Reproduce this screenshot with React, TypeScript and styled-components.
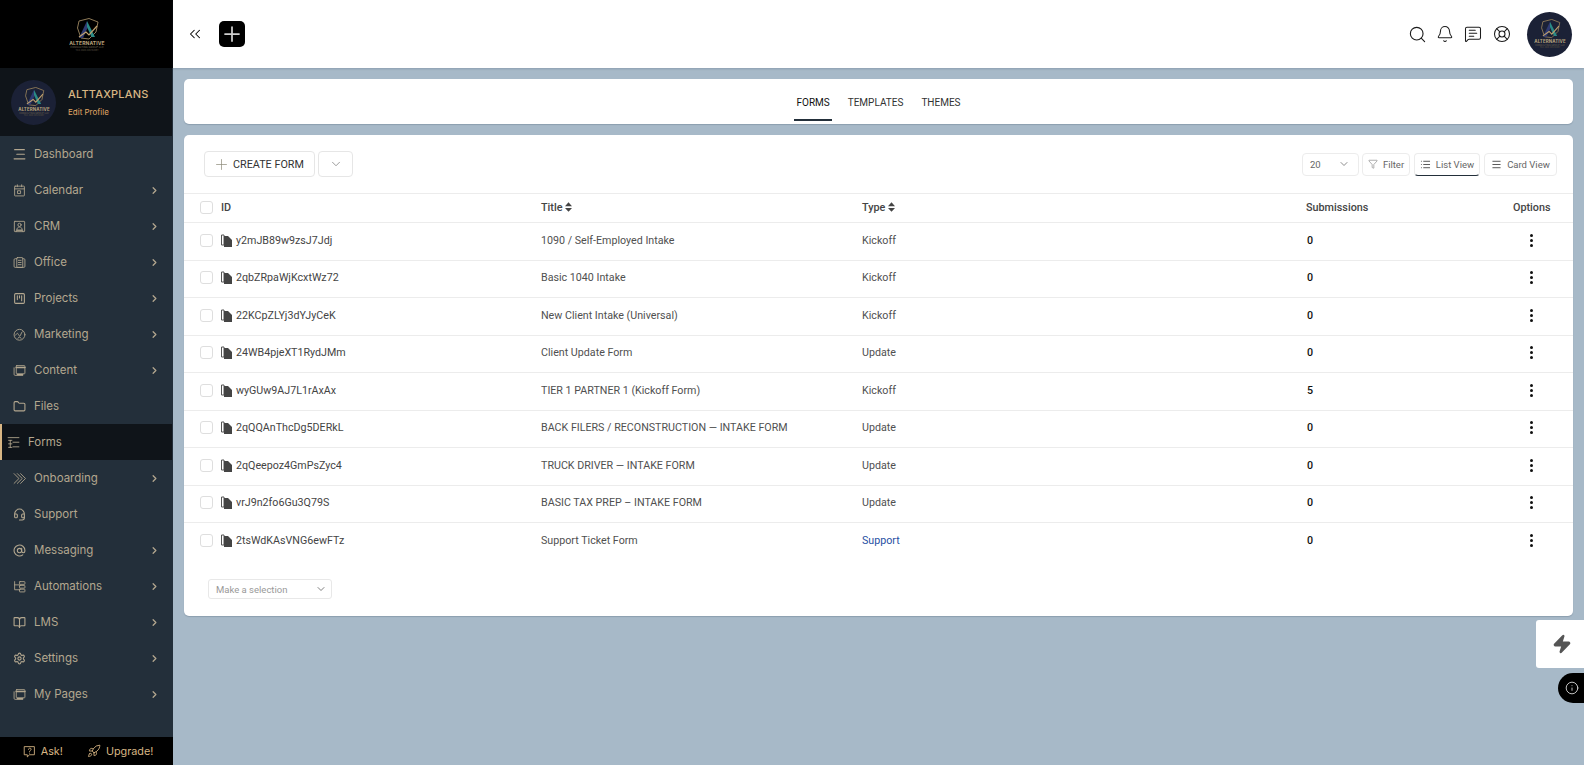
import React, { FC } from 'react';
import styled, { createGlobalStyle } from 'styled-components';
import {
  AtSign,
  Bell,
  BookOpen,
  ChevronDown,
  ChevronRight,
  ChevronsLeft,
  Filter,
  Folder,
  Headset,
  Info,
  LifeBuoy,
  List,
  Menu,
  MessageSquareText,
  Plus,
  Rocket,
  Search,
  Settings,
  SquareKanban,
  Zap,
} from 'lucide-react';

const sidebarText = '#b3a78f';
const gold = '#d8b684';

const GlobalStyle = createGlobalStyle`
  html, body {
    margin: 0;
    padding: 0;
    height: 100%;
    overflow: hidden;
    background: #a7b9c8;
    font-family: Roboto, "Liberation Sans", sans-serif;
  }
  * { box-sizing: border-box; }
`;

const Page = styled.div`
  display: flex;
  width: 1584px;
  height: 765px;
  position: relative;
  overflow: hidden;
`;

const Sidebar = styled.aside`
  width: 173px;
  flex: none;
  display: flex;
  flex-direction: column;
  background: #232f3a;
  font-family: Inter, "Liberation Sans", sans-serif;
`;

const Brand = styled.div`
  height: 68px;
  background: #000;
  display: flex;
  align-items: center;
  justify-content: center;
`;

const Profile = styled.div`
  height: 68px;
  background: #0f1419;
  display: flex;
  align-items: center;
  gap: 12px;
  padding-left: 11px;
  margin-right: 1px;
`;

const Avatar = styled.div<{ $size: number }>`
  width: ${(p) => p.$size}px;
  height: ${(p) => p.$size}px;
  flex: none;
  border-radius: 50%;
  background: #1b2136;
  display: flex;
  align-items: center;
  justify-content: center;
`;

const ProfileText = styled.div`
  display: flex;
  flex-direction: column;
  gap: 6px;
`;

const ProfileName = styled.div`
  font-size: 11px;
  font-weight: 500;
  letter-spacing: 0.2px;
  color: ${gold};
`;

const EditLink = styled.div`
  font-size: 8px;
  color: #e0a765;
`;

const Nav = styled.nav`
  flex: 1;
  display: flex;
  flex-direction: column;
`;

const NavItem = styled.div<{ $active?: boolean }>`
  height: 36px;
  display: flex;
  align-items: center;
  gap: 8px;
  padding-left: ${(p) => (p.$active ? '5px' : '13px')};
  padding-right: 13px;
  margin-right: ${(p) => (p.$active ? '1px' : '0')};
  color: ${sidebarText};
  font-size: 11.5px;
  background: ${(p) => (p.$active ? '#0f1419' : 'transparent')};
  border-left: ${(p) => (p.$active ? `2px solid ${gold}` : 'none')};
`;

const NavLabel = styled.span`
  flex: 1;
`;

const BottomBar = styled.div`
  height: 28px;
  background: #000;
  display: flex;
  align-items: center;
  justify-content: center;
  gap: 24px;
  padding-left: 3px;
  color: ${gold};
  font-size: 10.8px;
`;

const BottomLink = styled.div`
  display: flex;
  align-items: center;
  gap: 5px;
`;

const Main = styled.main`
  flex: 1;
  min-width: 0;
  display: flex;
  flex-direction: column;
`;

const Header = styled.header`
  height: 68px;
  flex: none;
  background: #fff;
  display: flex;
  align-items: center;
  padding: 0 12px 0 13px;
  box-shadow: 0 1px 2px rgba(60, 80, 100, 0.25);
`;

const PlusButton = styled.div`
  width: 26px;
  height: 26px;
  margin-left: 15px;
  margin-top: -1px;
  border-radius: 5px;
  background: #000;
  color: #cfcfcf;
  display: flex;
  align-items: center;
  justify-content: center;
`;

const HeaderIcons = styled.div`
  margin-left: auto;
  display: flex;
  align-items: center;
  color: #1c1c1c;
`;

const HeaderIcon = styled.div<{ $w: number }>`
  width: ${(p) => p.$w}px;
  display: flex;
  justify-content: center;
`;

const Content = styled.div`
  padding: 11px 11px 0;
  display: flex;
  flex-direction: column;
  gap: 11px;
`;

const Card = styled.section`
  background: #fff;
  border-radius: 5px;
  box-shadow: 0 1px 1px rgba(60, 80, 100, 0.25);
`;

const Tabs = styled(Card)`
  height: 45px;
  display: flex;
  justify-content: center;
  gap: 14px;
`;

const Tab = styled.div<{ $active?: boolean }>`
  height: 42px;
  padding: 6px 2px 0;
  display: flex;
  align-items: center;
  font-size: 10px;
  color: ${(p) => (p.$active ? '#111' : '#333')};
  border-bottom: 2px solid ${(p) => (p.$active ? '#232f3a' : 'transparent')};
`;

const Toolbar = styled.div`
  height: 58px;
  display: flex;
  align-items: center;
  padding: 0 16px 0 20px;
`;

const OutlineButton = styled.div`
  height: 26px;
  border: 1px solid #e6e6e6;
  border-radius: 4px;
  display: flex;
  align-items: center;
  justify-content: center;
  color: #555;
`;

const CreateButton = styled(OutlineButton)`
  width: 111px;
  justify-content: flex-start;
  padding-left: 8px;
  gap: 3px;
  font-size: 10.8px;
  color: #333;
`;

const PlusMark = styled.span`
  display: flex;
  color: #8c8a78;
`;

const MenuButton = styled(OutlineButton)`
  width: 35px;
  margin-left: 3px;
  color: #777;
`;

const ToolGroup = styled.div`
  margin-left: auto;
  display: flex;
  align-items: center;
  gap: 4px;
`;

const SmallButton = styled.div<{ $w: number; $active?: boolean }>`
  width: ${(p) => p.$w}px;
  height: 23px;
  border: 1px solid #ececec;
  border-bottom: 1px solid ${(p) => (p.$active ? '#232f3a' : '#ececec')};
  border-radius: 4px;
  display: flex;
  align-items: center;
  justify-content: center;
  gap: 5px;
  font-size: 9.5px;
  color: #666;
`;

const DarkIcon = styled.span`
  display: flex;
  color: #333;
`;

const PerPage = styled(SmallButton)`
  justify-content: space-between;
  padding: 0 8px 0 7px;
  margin-right: -1px;
`;

const Row = styled.div<{ $head?: boolean }>`
  display: grid;
  grid-template-columns: 21px 320px 321px 444px 207px 37px;
  align-items: center;
  height: ${(p) => (p.$head ? '29px' : '37.5px')};
  padding: 0 0 2px 16px;
  border-top: 1px solid #ececec;
  font-size: ${(p) => (p.$head ? '10.8px' : '10.7px')};
  font-weight: ${(p) => (p.$head ? 500 : 400)};
  color: ${(p) => (p.$head ? '#444' : '#505050')};
`;

const Check = styled.div`
  width: 13px;
  height: 13px;
  border: 1px solid #dedede;
  border-radius: 3px;
`;

const IdCell = styled.div`
  display: flex;
  align-items: center;
  gap: 4px;
  color: #444;
`;

const TitleCell = styled.div`
  display: flex;
  align-items: center;
  gap: 3px;
`;

const TypeCell = styled.div<{ $support?: boolean }>`
  color: ${(p) => (p.$support ? '#1f4fa3' : '#505050')};
`;

const Count = styled.div`
  font-weight: 500;
  color: #111;
  padding-left: 1px;
`;

const OptionsHead = styled.div`
  text-align: right;
  white-space: nowrap;
`;

const Kebab = styled.div`
  display: flex;
  flex-direction: column;
  align-items: center;
  gap: 2px;
`;

const Dot = styled.span`
  width: 3px;
  height: 3px;
  border-radius: 50%;
  background: #111;
`;

const Footer = styled.div`
  padding: 19px 24px 17px;
`;

const Selection = styled.div`
  width: 124px;
  height: 20px;
  border: 1px solid #e8e8e8;
  border-radius: 3px;
  display: flex;
  align-items: center;
  justify-content: space-between;
  padding: 1px 4px 0 7px;
  font-size: 9.5px;
  color: #999;
`;

const SideTab = styled.div`
  position: absolute;
  top: 620px;
  right: 0;
  width: 48px;
  height: 48px;
  background: #fff;
  border-radius: 3px 0 0 3px;
  display: flex;
  align-items: center;
  justify-content: center;
  padding-left: 4px;
  color: #555;
`;

const InfoPill = styled.div`
  position: absolute;
  top: 673px;
  right: 0;
  width: 26px;
  height: 30px;
  background: #000;
  border-radius: 15px 0 0 15px;
  display: flex;
  align-items: center;
  justify-content: center;
  padding-left: 2px;
  color: #ddd;
`;

const Logo: FC<{ size: number }> = ({ size }) => (
  <svg width={size} height={(size * 33) / 36} viewBox="0 0 36 33">
    <path d="M10 3 L20 0.5 L29 4 L27 14 L20 21 L12 20 L8.5 10 Z" fill="none" stroke="#8f7b58" strokeWidth="1" />
    <path d="M18 3 L10 20 H14 L18.5 10 Z" fill="#2f3a72" />
    <path d="M18 3 L26 19 H22.5 L18 9 Z" fill="#2a8a86" />
    <path d="M10 19 L17 14 L20 17 L28 8" fill="none" stroke="#c2a36f" strokeWidth="1.2" />
    <text x="18" y="27" textAnchor="middle" fontSize="5" fontWeight="700" letterSpacing="0.1" fill="#b9a27c" fontFamily="Inter, sans-serif">ALTERNATIVE</text>
    <text x="18" y="30" textAnchor="middle" fontSize="2.7" fill="#6d6250" fontFamily="Inter, sans-serif">CONSULTING GROUP LLC</text>
    <text x="18" y="32.8" textAnchor="middle" fontSize="2.4" fill="#5a5142" fontFamily="Inter, sans-serif">TAX AND ADVISORY</text>
  </svg>
);

const IconBase: FC<{ children: React.ReactNode; size?: number }> = ({ children, size = 13 }) => (
  <svg width={size} height={size} viewBox="0 0 24 24" fill="none" stroke="currentColor" strokeWidth="1.6" strokeLinecap="round" strokeLinejoin="round" style={{ flex: 'none' }}>
    {children}
  </svg>
);

const DashboardIcon = () => (
  <IconBase>
    <path d="M3 3h18M7 11.5h14M2 20h20" strokeWidth="2" />
  </IconBase>
);

const CalendarIcon = () => (
  <IconBase>
    <rect x="3" y="4" width="18" height="18" rx="1" />
    <path d="M3 9h18M8 1.5V5M16 1.5V5" />
    <rect x="9" y="12.5" width="5" height="5" />
  </IconBase>
);

const CrmIcon = () => (
  <IconBase>
    <rect x="2.5" y="2.5" width="19" height="19" rx="1" />
    <circle cx="12" cy="9" r="3" />
    <path d="M7 18c0-3 2-5 5-5s5 2 5 5zM6 21v-2h12v2" />
  </IconBase>
);

const OfficeIcon = () => (
  <IconBase>
    <path d="M7 5H4a2 2 0 0 0-2 2v12a2 2 0 0 0 2 2h16a2 2 0 0 0 2-2V7a2 2 0 0 0-2-2h-2" />
    <rect x="7" y="3" width="11" height="18" rx="1" />
    <path d="M10 8h5M10 12h5M10 16h5" />
  </IconBase>
);

const MarketingIcon = () => (
  <IconBase>
    <circle cx="12" cy="12.5" r="10" />
    <path d="M5 13c2-4 4-4 5-1s3 4 4 1 2-5 3-6" />
    <path d="M9 19c1-3 5-3 6 0" />
  </IconBase>
);

const PagesIcon = () => (
  <IconBase>
    <rect x="6" y="3" width="16" height="15" rx="1" />
    <path d="M6 6.5h16" strokeWidth="3" />
    <path d="M2 7v12a2 2 0 0 0 2 2h14" />
    <path d="M8 19.5h10" strokeWidth="2.5" />
  </IconBase>
);

const FormsIcon = () => (
  <IconBase>
    <path d="M2 3h20M11 11.5h11M11 20h11M3 8h6M6 8v13M3 21h6M3 14.5h6" />
  </IconBase>
);

const OnboardingIcon = () => (
  <IconBase>
    <path d="M2 3l9 9-9 9M8 3l9 9-9 9M14 3l9 9-9 9" />
  </IconBase>
);

const AutomationsIcon = () => (
  <IconBase>
    <path d="M3 3v15h9M3 9h9" />
    <rect x="12" y="3" width="10" height="5" rx="1" />
    <rect x="12" y="10" width="10" height="5" rx="1" />
    <rect x="12" y="17" width="10" height="5" rx="1" />
  </IconBase>
);

const AskIcon = () => (
  <IconBase>
    <path d="M3 3h18v15h-9l-4 4v-4H3z" />
    <path d="M10 8c0-3 5-3 5 0 0 2-3 2-3 4M12 15h.01" />
  </IconBase>
);

const SortIcon = () => (
  <svg width="7" height="10" viewBox="0 0 8 11" fill="#444">
    <path d="M4 0l4 4.5H0zM4 11L0 6.5h8z" />
  </svg>
);

const FileIcon = () => (
  <svg width="11" height="13" viewBox="0 0 11 13" style={{ flex: 'none' }}>
    <path d="M0.5 1H3V11H0.5z" fill="none" stroke="#555" />
    <path d="M3 2h4l4 4v7H3z" fill="#444" />
  </svg>
);

const navItems = [
  { label: 'Dashboard', icon: <DashboardIcon /> },
  { label: 'Calendar', icon: <CalendarIcon />, more: true },
  { label: 'CRM', icon: <CrmIcon />, more: true },
  { label: 'Office', icon: <OfficeIcon />, more: true },
  { label: 'Projects', icon: <SquareKanban size={13} />, more: true },
  { label: 'Marketing', icon: <MarketingIcon />, more: true },
  { label: 'Content', icon: <PagesIcon />, more: true },
  { label: 'Files', icon: <Folder size={13} /> },
  { label: 'Forms', icon: <FormsIcon />, active: true },
  { label: 'Onboarding', icon: <OnboardingIcon />, more: true },
  { label: 'Support', icon: <Headset size={13} /> },
  { label: 'Messaging', icon: <AtSign size={13} />, more: true },
  { label: 'Automations', icon: <AutomationsIcon />, more: true },
  { label: 'LMS', icon: <BookOpen size={13} />, more: true },
  { label: 'Settings', icon: <Settings size={13} />, more: true },
  { label: 'My Pages', icon: <PagesIcon />, more: true },
];

const forms = [
  { id: 'y2mJB89w9zsJ7Jdj', title: '1090 / Self-Employed Intake', type: 'Kickoff', count: 0 },
  { id: '2qbZRpaWjKcxtWz72', title: 'Basic 1040 Intake', type: 'Kickoff', count: 0 },
  { id: '22KCpZLYj3dYJyCeK', title: 'New Client Intake (Universal)', type: 'Kickoff', count: 0 },
  { id: '24WB4pjeXT1RydJMm', title: 'Client Update Form', type: 'Update', count: 0 },
  { id: 'wyGUw9AJ7L1rAxAx', title: 'TIER 1 PARTNER 1 (Kickoff Form)', type: 'Kickoff', count: 5 },
  { id: '2qQQAnThcDg5DERkL', title: 'BACK FILERS / RECONSTRUCTION — INTAKE FORM', type: 'Update', count: 0 },
  { id: '2qQeepoz4GmPsZyc4', title: 'TRUCK DRIVER — INTAKE FORM', type: 'Update', count: 0 },
  { id: 'vrJ9n2fo6Gu3Q79S', title: 'BASIC TAX PREP – INTAKE FORM', type: 'Update', count: 0 },
  { id: '2tsWdKAsVNG6ewFTz', title: 'Support Ticket Form', type: 'Support', count: 0 },
];

const App: FC = () => (
  <Page>
    <GlobalStyle />
    <Sidebar>
      <Brand>
        <Logo size={36} />
      </Brand>
      <Profile>
        <Avatar $size={45}>
          <Logo size={32} />
        </Avatar>
        <ProfileText>
          <ProfileName>ALTTAXPLANS</ProfileName>
          <EditLink>Edit Profile</EditLink>
        </ProfileText>
      </Profile>
      <Nav>
        {navItems.map((item) => (
          <NavItem key={item.label} $active={item.active}>
            {item.icon}
            <NavLabel>{item.label}</NavLabel>
            {item.more && <ChevronRight size={11} strokeWidth={2.75} />}
          </NavItem>
        ))}
      </Nav>
      <BottomBar>
        <BottomLink>
          <AskIcon />
          Ask!
        </BottomLink>
        <BottomLink>
          <Rocket size={14} strokeWidth={1.5} />
          Upgrade!
        </BottomLink>
      </BottomBar>
    </Sidebar>
    <Main>
      <Header>
        <ChevronsLeft size={18} strokeWidth={1.4} />
        <PlusButton>
          <Plus size={24} strokeWidth={1.75} />
        </PlusButton>
        <HeaderIcons>
          <HeaderIcon $w={28}>
            <Search size={19} strokeWidth={1.4} />
          </HeaderIcon>
          <HeaderIcon $w={28}>
            <Bell size={18} strokeWidth={1.4} />
          </HeaderIcon>
          <HeaderIcon $w={28}>
            <MessageSquareText size={18} strokeWidth={1.4} />
          </HeaderIcon>
          <HeaderIcon $w={30}>
            <LifeBuoy size={18} strokeWidth={1.4} />
          </HeaderIcon>
          <HeaderIcon $w={10} />
          <Avatar $size={45}>
            <Logo size={32} />
          </Avatar>
        </HeaderIcons>
      </Header>
      <Content>
        <Tabs>
          <Tab $active>FORMS</Tab>
          <Tab>TEMPLATES</Tab>
          <Tab>THEMES</Tab>
        </Tabs>
        <Card>
          <Toolbar>
            <CreateButton>
              <PlusMark>
                <Plus size={17} strokeWidth={1} />
              </PlusMark>
              CREATE FORM
            </CreateButton>
            <MenuButton>
              <ChevronDown size={14} strokeWidth={1.25} />
            </MenuButton>
            <ToolGroup>
              <PerPage $w={57}>
                20
                <ChevronDown size={12} strokeWidth={1.5} />
              </PerPage>
              <SmallButton $w={48}>
                <Filter size={10} strokeWidth={1.25} />
                Filter
              </SmallButton>
              <SmallButton $w={66} $active>
                <DarkIcon>
                  <List size={11} strokeWidth={1.75} />
                </DarkIcon>
                List View
              </SmallButton>
              <SmallButton $w={73}>
                <DarkIcon>
                  <Menu size={11} strokeWidth={1.75} />
                </DarkIcon>
                Card View
              </SmallButton>
            </ToolGroup>
          </Toolbar>
          <Row $head>
            <Check />
            <div>ID</div>
            <TitleCell>
              Title <SortIcon />
            </TitleCell>
            <TitleCell>
              Type <SortIcon />
            </TitleCell>
            <div>Submissions</div>
            <OptionsHead>Options</OptionsHead>
          </Row>
          {forms.map((form) => (
            <Row key={form.id}>
              <Check />
              <IdCell>
                <FileIcon />
                {form.id}
              </IdCell>
              <div>{form.title}</div>
              <TypeCell $support={form.type === 'Support'}>{form.type}</TypeCell>
              <Count>{form.count}</Count>
              <Kebab>
                <Dot />
                <Dot />
                <Dot />
              </Kebab>
            </Row>
          ))}
          <Footer>
            <Selection>
              Make a selection
              <ChevronDown size={12} strokeWidth={1.5} color="#555" />
            </Selection>
          </Footer>
        </Card>
      </Content>
    </Main>
    <SideTab>
      <Zap size={20} fill="currentColor" />
    </SideTab>
    <InfoPill>
      <Info size={14} strokeWidth={1.5} />
    </InfoPill>
  </Page>
);

export default App;
